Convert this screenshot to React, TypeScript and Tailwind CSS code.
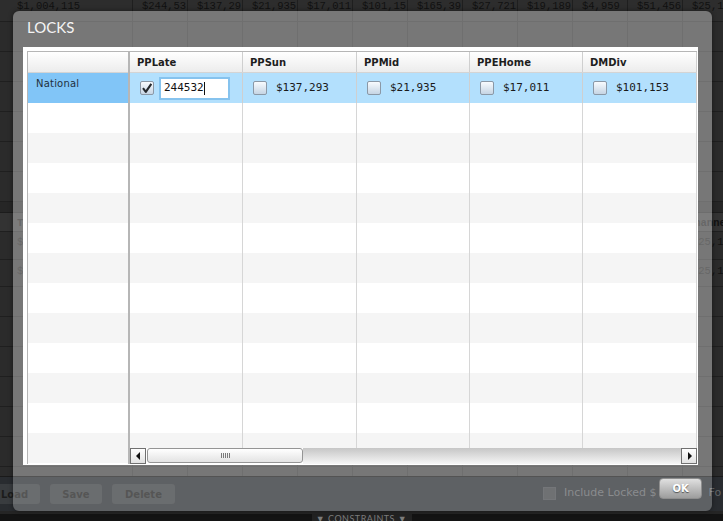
import React from 'react';

const bgValues = ['$244,53', '$137,29', '$21,935', '$17,011', '$101,15', '$165,39', '$27,721', '$19,189', '$4,959', '$51,456', '$25,12'];
const bgHeads = ['PPLate', 'PPSun', 'PPMid', 'PPEHome', 'DMDiv', 'DMNat', 'Radio', 'Print', 'OOH', 'Search', 'Channel'];

const cols = [
  { name: 'PPLate', value: '244532', width: 'w-[113px]', editing: true },
  { name: 'PPSun', value: '$137,293', width: 'w-[114px]' },
  { name: 'PPMid', value: '$21,935', width: 'w-[113px]' },
  { name: 'PPEHome', value: '$17,011', width: 'w-[113px]' },
  { name: 'DMDiv', value: '$101,153', width: 'w-[114px]' },
];

const rows = Array.from({ length: 12 }, (_, i) => i + 1);

const BgRow = ({ h, first, values, cls = '', cell = 'pl-[9px]' }: { h: string; first?: string; values?: string[]; cls?: string; cell?: string }) => (
  <div className={`flex shrink-0 border-b border-[#1f1f1f] ${h} ${cls}`}>
    <div className="w-[133px] shrink-0 border-r border-[#1f1f1f] pl-[17px] overflow-hidden whitespace-nowrap">{first}</div>
    {bgHeads.map((_, i) => (
      <div key={i} className={`w-[55px] shrink-0 border-r border-[#1f1f1f] overflow-hidden whitespace-nowrap ${cell}`}>
        {values ? values[i] : ''}
      </div>
    ))}
  </div>
);

const Check = ({ on }: { on?: boolean }) => (
  <span className="w-[14px] h-[14px] shrink-0 border border-[#8b98a6] rounded-[2px] bg-gradient-to-b from-[#f8fbfe] to-[#c6d5e4] flex items-center justify-center">
    {on && (
      <svg width="12" height="12" viewBox="0 0 12 12">
        <path d="M2 6.2l2.8 3.6L10.3 1.8" fill="none" stroke="#262a2e" strokeWidth="2.1" strokeLinejoin="round" />
      </svg>
    )}
  </span>
);

const Background = () => (
  <div className="flex flex-col w-[723px] h-[521px] bg-[#2b2b2b] text-[#111] text-[10.5px] leading-[13px] font-['Liberation_Mono',monospace]">
    <div className="flex flex-col h-[476px] overflow-hidden">
      <BgRow h="h-[22px]" first="$1,004,115" values={bgValues} cls="bg-[#2d2d2d]" />
      {[0, 1, 2, 3, 4, 5].map((i) => (
        <BgRow key={i} h="h-[30px]" />
      ))}
      <div className="h-[11px] shrink-0 bg-[#262626] border-b border-[#1c1c1c]" />
      <BgRow h="h-[19px]" first="Total" values={bgHeads} cls="bg-[#333] font-bold pt-[4px]" cell="text-center" />
      <BgRow h="h-[28px]" first="$1,004,115" values={bgValues} cls="pt-[4px]" />
      <BgRow h="h-[27px]" first="$1,004,115" values={bgValues} cls="pt-[5px]" />
      {[0, 1, 2, 3, 4, 5, 6].map((i) => (
        <BgRow key={i} h="h-[30px]" />
      ))}
    </div>
    <div className="h-[35px] shrink-0 flex items-start pt-[7px] bg-[#292c30] border-t border-[#1a1a1a] font-['DejaVu_Sans',sans-serif] whitespace-nowrap">
      <div className="ml-[-11px] w-[51px] h-[20px] shrink-0 rounded-[3px] bg-[#393c3f] text-[#1c1c1c] text-[10px] font-bold flex items-center justify-center">Load</div>
      <div className="ml-[10px] w-[52px] h-[20px] shrink-0 rounded-[3px] bg-[#393c3f] text-[#1c1c1c] text-[10px] font-bold flex items-center justify-center">Save</div>
      <div className="ml-[10px] w-[63px] h-[20px] shrink-0 rounded-[3px] bg-[#393c3f] text-[#1c1c1c] text-[10px] font-bold flex items-center justify-center">Delete</div>
      <div className="ml-[368px] mt-[3px] w-[13px] h-[13px] shrink-0 bg-[#3f4245] border border-[#46494c]" />
      <div className="ml-[8px] mt-[2px] shrink-0 text-[11px] leading-[14px] text-[#636669]">Include Locked $</div>
      <div className="ml-[52px] mt-[2px] shrink-0 text-[11px] leading-[14px] text-[#636669]">Fo</div>
    </div>
    <div className="h-[10px] shrink-0 bg-[#131313] border-t-[3px] border-[#252525] flex justify-center">
      <div className="w-[100px] bg-[#222] text-[#7c7c7c] text-[9px] leading-[9px] text-center font-['Lato',sans-serif] tracking-[0.5px] overflow-hidden whitespace-nowrap">
        ▼ CONSTRAINTS ▼
      </div>
    </div>
  </div>
);

const Scrollbar = () => (
  <div className="flex h-[16px] shrink-0">
    <div className="w-[16px] h-[16px] shrink-0 border border-[#707070] bg-gradient-to-b from-white to-[#e2e2e2] flex items-center justify-center">
      <svg width="5" height="8" viewBox="0 0 5 8">
        <path d="M4 0v8L0 4z" fill="#111" />
      </svg>
    </div>
    <div className="ml-[1px] w-[156px] h-[15px] shrink-0 rounded-[3px] border border-[#959595] bg-gradient-to-b from-white to-[#e3e3e3] flex items-center justify-center gap-[1px]">
      {[0, 1, 2, 3, 4].map((i) => (
        <span key={i} className="w-[1px] h-[5px] bg-[#7a7a7a]" />
      ))}
    </div>
    <div className="flex-1 bg-gradient-to-b from-[#c6c6c6] via-[#dedede] to-[#f6f6f6]" />
    <div className="w-[16px] h-[16px] shrink-0 border border-[#707070] bg-gradient-to-b from-white to-[#e2e2e2] flex items-center justify-center">
      <svg width="5" height="8" viewBox="0 0 5 8">
        <path d="M1 0v8L5 4z" fill="#111" />
      </svg>
    </div>
  </div>
);

const LocksDialog = () => (
  <div className="absolute left-[13px] top-[11px] w-[699px] h-[500px] rounded-[6px] overflow-hidden flex flex-col shadow-[0_0_5px_rgba(0,0,0,0.45)]">
    <div className="h-[465px] shrink-0 bg-white/[0.36] flex flex-col">
      <div className="h-[36px] shrink-0 pl-[14px] pt-[7px] text-[15px] leading-[18px] text-[#f4f4f4] font-['Lato',sans-serif]">LOCKS</div>
      <div className="ml-[10px] w-[675px] h-[418px] bg-white pl-[4px] pt-[4px] font-['DejaVu_Sans',sans-serif]">
        <div className="flex w-[670px] h-[413px] border-l border-t border-[#b6b6b6]">
          {/* row header column */}
          <div className="w-[102px] shrink-0 flex flex-col border-r-2 border-[#b6b6b6]">
            <div className="h-[21px] shrink-0 bg-gradient-to-b from-white to-[#ececec] border-b border-[#d4d4d4]" />
            <div className="h-[30px] shrink-0 bg-[#81c5f7] pl-[8px] pt-[5px] text-[10px] leading-[12px] tracking-[0.2px] text-[#22303d]">National</div>
            {rows.map((r) => (
              <div key={r} className={`h-[30px] shrink-0 ${r % 2 === 0 ? 'bg-[#f5f5f5]' : 'bg-white'}`} />
            ))}
          </div>
          {/* data columns */}
          <div className="w-[567px] shrink-0 flex flex-col">
            <div className="flex h-[21px] shrink-0 bg-gradient-to-b from-white to-[#ececec] border-b border-[#d4d4d4]">
              {cols.map((c) => (
                <div key={c.name} className={`${c.width} shrink-0 border-r border-[#cfcfcf] pl-[7px] flex items-center text-[10px] font-bold text-[#1e1e1e]`}>
                  {c.name}
                </div>
              ))}
            </div>
            <div className="h-[375px] shrink-0 overflow-hidden flex flex-col">
              <div className="flex h-[30px] shrink-0 bg-[#b3e0fd]">
                {cols.map((c) => (
                  <div key={c.name} className={`${c.width} shrink-0 border-r border-[#cfcfcf] pl-[10px] flex items-center`}>
                    <Check on={c.editing} />
                    {c.editing ? (
                      <div className="ml-[5px] w-[71px] h-[23px] border-2 border-[#86c3ee] bg-white pl-[3px] flex items-center text-[11px] text-[#111] font-['DejaVu_Sans_Mono',monospace]">
                        {c.value}
                        <span className="w-[1px] h-[13px] bg-[#111]" />
                      </div>
                    ) : (
                      <span className="ml-[9px] text-[11px] text-[#1a1a1a] font-['DejaVu_Sans_Mono',monospace]">{c.value}</span>
                    )}
                  </div>
                ))}
              </div>
              {rows.map((r) => (
                <div key={r} className={`flex h-[30px] shrink-0 ${r % 2 === 0 ? 'bg-[#f5f5f5]' : 'bg-white'}`}>
                  {cols.map((c) => (
                    <div key={c.name} className={`${c.width} shrink-0 border-r border-[#d6d6d6]`} />
                  ))}
                </div>
              ))}
            </div>
            <Scrollbar />
          </div>
        </div>
      </div>
    </div>
    <div className="h-[35px] shrink-0 bg-white/25 flex justify-end items-start pt-[2px] pr-[10px]">
      <button className="w-[43px] h-[21px] rounded-[4px] border border-[#8e8e8e] bg-gradient-to-b from-[#e0e0e0] to-[#9d9d9d] text-white text-[10px] font-bold font-['DejaVu_Sans',sans-serif] [text-shadow:0_1px_1px_rgba(0,0,0,0.55)]">
        OK
      </button>
    </div>
  </div>
);

export default function App() {
  return (
    <div className="relative w-[723px] h-[521px] overflow-hidden">
      <Background />
      <LocksDialog />
    </div>
  );
}
